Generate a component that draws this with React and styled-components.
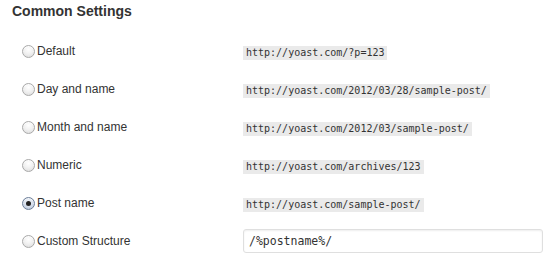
import React, { useState } from "react";
import styled, { createGlobalStyle } from "styled-components";

const options = [
  { id: "default", label: "Default", sample: "http://yoast.com/?p=123" },
  { id: "day", label: "Day and name", sample: "http://yoast.com/2012/03/28/sample-post/" },
  { id: "month", label: "Month and name", sample: "http://yoast.com/2012/03/sample-post/" },
  { id: "numeric", label: "Numeric", sample: "http://yoast.com/archives/123" },
  { id: "post", label: "Post name", sample: "http://yoast.com/sample-post/" },
  { id: "custom", label: "Custom Structure", custom: true },
];

function App() {
  const [selected, setSelected] = useState("post");
  const [structure, setStructure] = useState("/%postname%/");

  return (
    <>
      <GlobalStyle />
      <Wrapper>
        <Title>Common Settings</Title>
        <Rows>
          {options.map((opt) => (
            <Row key={opt.id}>
              <Choice>
                <Radio
                  type="radio"
                  name="permalink"
                  checked={selected === opt.id}
                  onChange={() => setSelected(opt.id)}
                />
                {opt.label}
              </Choice>
              {opt.custom ? (
                <StructureInput
                  value={structure}
                  onChange={(e) => setStructure(e.target.value)}
                />
              ) : (
                <div>
                  <Code>{opt.sample}</Code>
                </div>
              )}
            </Row>
          ))}
        </Rows>
      </Wrapper>
    </>
  );
}

const GlobalStyle = createGlobalStyle`
  body {
    margin: 0;
    background: #fff;
    font-family: "Liberation Sans", Arial, sans-serif;
    color: #333;
  }
`;

const Wrapper = styled.div`
  padding: 3px 0 0 12px;
`;

const Title = styled.h3`
  margin: 0;
  font-size: 14px;
  line-height: 16px;
  font-weight: bold;
  color: #333;
`;

const Rows = styled.div`
  margin-top: 13px;
  padding-left: 10px;
  display: flex;
  flex-direction: column;
`;

const Row = styled.div`
  display: grid;
  grid-template-columns: 221px 1fr;
  align-items: center;
  height: 38px;
`;

const Choice = styled.label`
  display: flex;
  align-items: center;
  gap: 2px;
  font-size: 12px;
  color: #333;
`;

const Radio = styled.input`
  appearance: none;
  margin: 0;
  width: 13px;
  height: 13px;
  border-radius: 50%;
  border: 1px solid #a9a9a9;
  background: radial-gradient(circle at 50% 30%, #ffffff 0%, #f0f0f0 50%, #d9d9d9 100%);
  box-shadow: inset 0 1px 1px rgba(255, 255, 255, 0.8);
  position: relative;

  &:checked {
    border-color: #6d7f99;
    background: radial-gradient(circle at 50% 35%, #f4f7fb 0%, #cfd9e8 60%, #a9b9d0 100%);
  }

  &:checked::after {
    content: "";
    position: absolute;
    left: 50%;
    top: 50%;
    width: 5px;
    height: 5px;
    margin: -2.5px 0 0 -2.5px;
    border-radius: 50%;
    background: #222;
  }
`;

const Code = styled.code`
  display: inline-block;
  font-family: "DejaVu Sans Mono", "Liberation Mono", monospace;
  font-size: 10px;
  line-height: 14px;
  padding: 0 3px;
  background: #eaeaea;
  color: #333;
`;

const StructureInput = styled.input`
  box-sizing: border-box;
  width: 300px;
  height: 24px;
  padding: 0 5px;
  border: 1px solid #dfdfdf;
  border-radius: 3px;
  box-shadow: inset 0 1px 2px rgba(0, 0, 0, 0.07);
  font-family: "DejaVu Sans Mono", "Liberation Mono", monospace;
  font-size: 11.5px;
  color: #333;
  outline: none;
`;

export default App;
